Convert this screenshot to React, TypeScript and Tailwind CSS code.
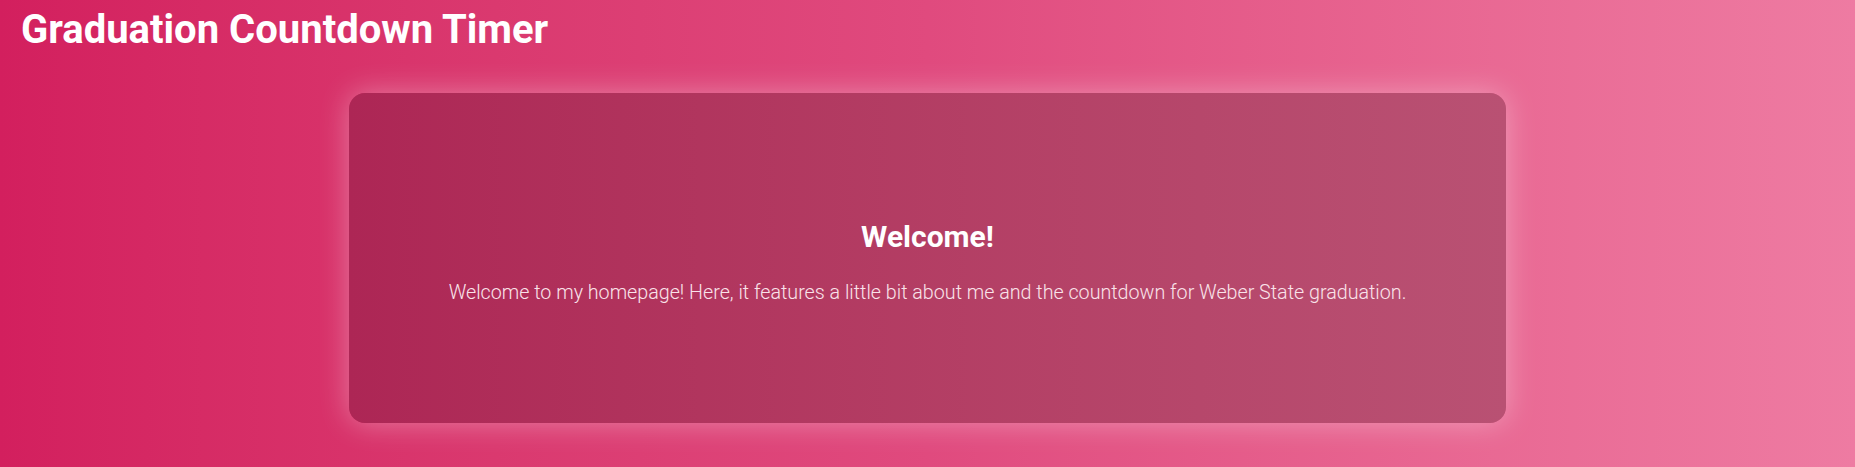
import React from "react";

export default function App() {
  return (
    <div
      className="min-h-screen w-full bg-gradient-to-r from-[#d31f5e] via-[#e04a7e] to-[#ee7ba2] text-white"
      style={{ fontFamily: "Roboto, 'Liberation Sans', sans-serif" }}
    >
      <h1 className="px-[21px] pt-[4px] text-[40px] font-bold leading-[52px]">
        Graduation Countdown Timer
      </h1>
      <div className="mt-[37px] flex justify-center">
        <div className="flex h-[330px] w-[1157px] flex-col items-center justify-center rounded-2xl bg-gradient-to-r from-[#ad2655] to-[#b95173] pt-[7px] shadow-[0_0_30px_rgba(255,255,255,0.35)]">
          <h2 className="text-[30px] font-bold leading-[38px]">Welcome!</h2>
          <p className="mt-[24px] text-[19.7px] font-light leading-[26px] text-[#fae3ea]">
            Welcome to my homepage! Here, it features a little bit about me and the countdown for Weber State graduation.
          </p>
        </div>
      </div>
    </div>
  );
}
